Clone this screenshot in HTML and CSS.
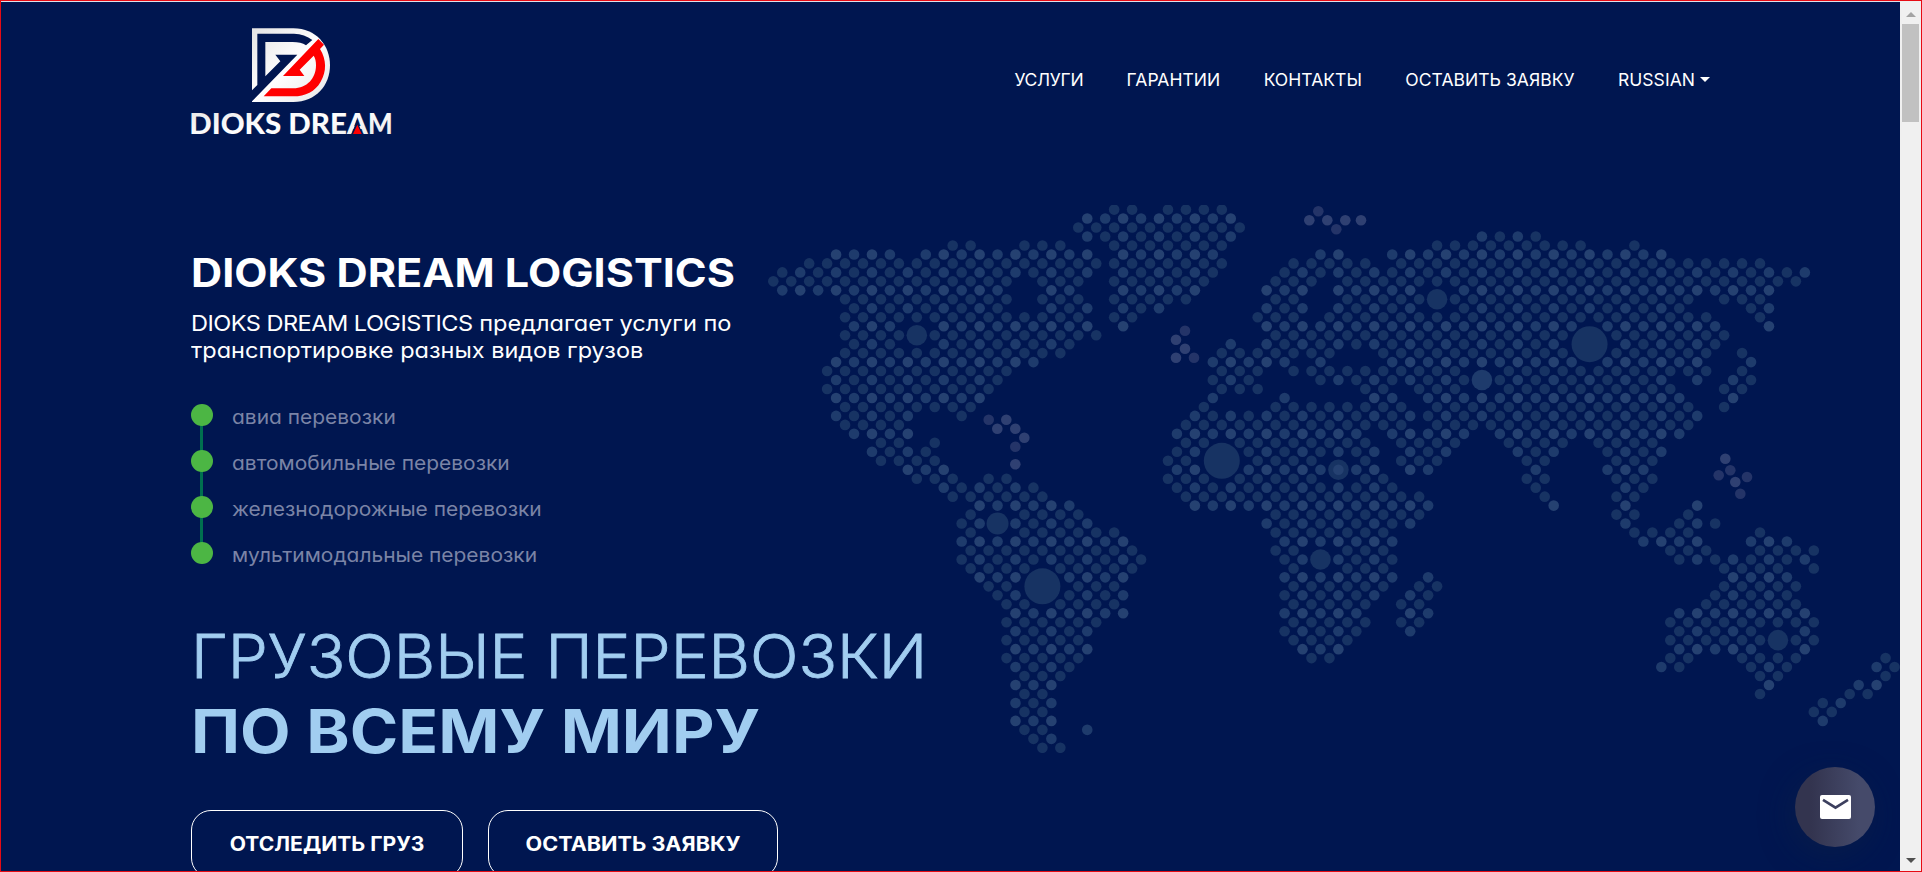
FILE: index.html
```html
<!DOCTYPE html>
<html lang="ru">
<head>
<meta charset="utf-8">
<title>DIOKS DREAM LOGISTICS</title>
<link rel="stylesheet" href="styles.css">
</head>
<body>
<div class="frame">
  <main class="page">
    <svg class="map" id="map" viewBox="768 205 1132 548" aria-hidden="true"></svg>
    <header class="header">
      <a class="logo" href="#" aria-label="DIOKS DREAM">
        <svg viewBox="60 50 624 360" width="208" height="120">
          <defs>
            <linearGradient id="silver" x1="0" y1="0" x2="1" y2="1">
              <stop offset="0" stop-color="#e4e4e4"/><stop offset=".5" stop-color="#fff"/><stop offset="1" stop-color="#e6e6e6"/>
            </linearGradient>
          </defs>
          <path fill="url(#silver)" d="M246 54H370C438 54 480 105 480 165S438 275 370 275H246Z"/>
          <path fill="#001650" d="M262 70H372Q404 71 427 89L408 105Q393 95 368 95H286V198L331 153L316 133H382L243 276V243L262 224Z"/>
          <path fill="url(#silver)" d="M246 275L439 84L452 96L290 262H262Z"/>
          <path fill="#f00" d="M445 86L462 103L450 116C470 148 470 184 452 214C436 243 406 258 370 258H281L304 234H370C411 234 438 204 438 165C438 152 436 144 431 136L389 178L403 197H339Z"/>
          <text class="logo-text" y="371"><tspan x="58" textLength="276" lengthAdjust="spacingAndGlyphs">DIOKS</tspan> <tspan x="355" textLength="238" lengthAdjust="spacingAndGlyphs">DREA</tspan><tspan x="594" textLength="74" lengthAdjust="spacingAndGlyphs">M</tspan></text>
          <path fill="#001650" d="M561 328L578 373H544Z"/>
          <path fill="#f00" d="M562 343L575 371H549Z"/>
        </svg>
      </a>
      <nav class="nav">
        <a class="tight" href="#">УСЛУГИ</a>
        <a href="#">ГАРАНТИИ</a>
        <a href="#">КОНТАКТЫ</a>
        <a href="#">ОСТАВИТЬ ЗАЯВКУ</a>
        <a href="#">RUSSIAN<i class="caret"></i></a>
      </nav>
    </header>
    <section class="hero">
      <h1 class="title"><span>DIOKS DREAM LOGISTICS</span></h1>
      <p class="lead"><span class="lead-a"><span class="latin">DIOKS DREAM LOGISTICS</span> предлагает услуги по</span><br><span class="lead-b">транспортировке разных видов грузов</span></p>
      <ul class="services">
        <li><span>авиа перевозки</span></li>
        <li><span>автомобильные перевозки</span></li>
        <li><span>железнодорожные перевозки</span></li>
        <li><span>мультимодальные перевозки</span></li>
      </ul>
      <h2 class="slogan"><span class="thin">ГРУЗОВЫЕ ПЕРЕВОЗКИ</span><span class="bold">ПО ВСЕМУ МИРУ</span></h2>
      <div class="actions">
        <a class="btn b1" href="#"><span>ОТСЛЕДИТЬ ГРУЗ</span></a>
        <a class="btn b2" href="#"><span>ОСТАВИТЬ ЗАЯВКУ</span></a>
      </div>
    </section>
    <a class="mail" href="#" aria-label="Почта">
      <svg viewBox="0 0 31 24" width="31" height="24"><rect width="31" height="24" rx="2" fill="#fff"/><path d="M3 4.8L15.500 12.700L28 4.800" fill="none" stroke="#3c3f5e" stroke-width="2.600"/></svg>
    </a>
  </main>
  <aside class="scrollbar"><i class="up"></i><i class="thumb"></i><i class="down"></i></aside>
</div>
<script src="map.js"></script>
</body>
</html>
```
FILE: styles.css
```css
* { box-sizing: border-box; }
body { margin: 0; background: #001650; font-family: Inter, "Open Sans", sans-serif; font-feature-settings: "cv11"; overflow: hidden; }
a { color: inherit; text-decoration: none; }
.frame { width: 1922px; height: 872px; border: 1px solid #e60b14; display: flex; overflow: hidden; }
.page { position: relative; flex: 1; background: #001650; overflow: hidden; color: #fff; border-top: 1px solid #dfe1ea; }
.map { position: absolute; left: 767px; top: 203px; width: 1132px; height: 548px; }
.header { position: relative; display: flex; justify-content: space-between; align-items: flex-start; height: 200px; padding: 24.700px 190px 0 189px; }
.logo svg { display: block; }
.logo-text { font: 900 86px Lato, sans-serif; fill: url(#silver); }
.nav { display: flex; gap: 43.300px; padding-top: 42px; font-size: 17.500px; line-height: 22px; font-weight: 400; white-space: nowrap; }
.nav a { display: flex; align-items: center; letter-spacing: .05px; }
.nav .tight { letter-spacing: -.3px; }
.caret { margin-left: 5px; border: 5px solid transparent; border-top: 5px solid #fff; border-bottom: 0; }
.hero { position: relative; padding: 45px 0 0 190px; white-space: nowrap; }
.title { margin: 0; font-size: 39px; line-height: 52px; font-weight: 700; }
.title > span, .lead > span, .services span { display: inline-block; transform-origin: 0 50%; }
.title span { transform: scaleX(1.106); }
.lead { margin: 10.500px 0 0; font-size: 22px; line-height: 27px; }
.lead .latin { letter-spacing: -.5px; }
.lead .lead-a { transform: scaleX(1.071); }
.lead .lead-b { transform: scaleX(1.068); }
.services { list-style: none; margin: 28px 0 0; padding: 0; color: #7b84a6; font-size: 20px; }
.services span { transform: scaleX(1.047); }
.services li { position: relative; height: 46.100px; line-height: 46px; padding: 2.500px 0 0 41px; }
.services li::before { content: ""; position: absolute; left: 0; top: 12px; width: 22px; height: 22px; border-radius: 50%; background: #4cb644; z-index: 1; }
.services li:not(:last-child)::after { content: ""; position: absolute; left: 9px; top: 30px; width: 3px; height: 32px; background: #00704f; }
.slogan { margin: 43.500px 0 0; font-size: 60px; line-height: 75px; color: #a1cdf0; }
.slogan span { display: block; transform-origin: 0 50%; }
.slogan .thin { font-weight: 350; transform: scaleX(1.063); -webkit-text-stroke: .8px #a1cdf0; }
.slogan .bold { font-weight: 700; transform: scaleX(1.095); }
.actions { display: flex; gap: 25px; margin-top: 41px; font-size: 19.500px; font-weight: 700; }
.btn { height: 68px; border: 1px solid #fff; border-radius: 20px; display: flex; align-items: center; justify-content: center; }
.btn span { transform: scaleX(1.080); }
.b1 { width: 272px; }
.b2 { width: 290px; }
.b2 span { transform: scaleX(1.108); }
.mail { position: absolute; left: 1794px; top: 765px; width: 80px; height: 80px; border-radius: 50%; background: linear-gradient(90deg, #33344f 20%, #454a6a 80%); box-shadow: -4px 8px 30px rgba(12, 32, 70, .55); display: flex; align-items: center; justify-content: center; }
.scrollbar { width: 21px; background: #f0f0f0; display: flex; flex-direction: column; align-items: center; padding: 11px 0 8px; }
.up { border: 5px solid transparent; border-bottom: 5px solid #a3a3a3; border-top: 0; }
.thumb { width: 17px; height: 98px; margin-top: 7px; background: #c1c1c1; }
.down { margin-top: auto; border: 5px solid transparent; border-top: 5px solid #505050; border-bottom: 0; }
```
FILE: map.js
```javascript
// Each row lists runs of occupied lattice columns; columns advance by two.
const rows = [
  "38-40,44-50", "35-51", "34-52", "35-51,79-85", "20-22,28-32,38-50,74-90,96",
  "7-13,17-35,39-49,61-63,69-99", "4-50,58-66,70-110", "1-35,39-49,57-115",
  "0-26,30-34,38-48,56-60,64-114", "1-25,31-33,39-47,55-59,63-71,77-111",
  "8-26,30-34,38-46,56-58,64-72,76-102,106-110", "9-25,31-35,39-43,55-59,63-71,77-101,109-111",
  "8-34,38-40,54-58,62-104,110", "9-13,19-35,39,55-89,93-105,111", "8-14,18-36,56-88,94-106",
  "9-13,19-33,51,55-87,95-105", "8-32,50-62,68-88,94-104,108", "7-29,49-57,61,69-89,93-103,109",
  "6-26,50-54,58-76,82-104,108", "7-25,49-53,61-77,81-99,103,107-109",
  "6-24,50-54,66-68,72-76,82-100,106-108", "7-23,49,57,67-69,73-101,107", "8-22,48,56-70,74-102,106",
  "7-15,21,47-103", "8-14,46-70,74-102", "9-15,45-65,69-77,81-101",
  "12-14,18,46-48,52-66,70-76,82-88,92-98", "11-17,45-47,53-67,71-75,83-87,93-99",
  "12-18,44-46,54-60,66,70-74,84-86,94-98", "15-19,45-47,53-67,71-73,85,93-97",
  "16-20,24-26,44-48,52-60,66-68,84-86,94-98", "19-29,45-69,85,95-97", "20-30,46-72,86,94-96",
  "23-33,47-73,87,95,103", "22,28-34,56-72,94-96,102", "21-23,27-35,55-71,95,101-105",
  "22,28-38,56-68,96-102,110", "21-39,57-69,97-103,109-113", "22-40,56-58,64-68,100-104,110-116",
  "21-41,57-59,63-69,101-115", "22-28,32-40,58,64-68,106-112,116", "23-27,33-39,57-69,73,107-113",
  "24-26,34-38,58-68,72-74,106-114", "25-27,33-39,57-67,71-73,105-113", "26-28,32-38,58-66,70-72,104-114",
  "27-39,57-65,71-73,101-115", "26-36,58-66,70-72,100-116", "27-35,57-65,71,101-109,115",
  "26-34,58-64,100-110,114-116", "27-35,59-63,101-109,115", "26-34,60-62,100-102,108-114,124",
  "27-33,99-101,109-113,123-125", "28-32,110-112,124", "27-31,111,121-123", "28-30,110,120-122",
  "27-31,117-119", "28-30,116-118", "27-31,117", "28-30", "29-31", "30-32"
];
const STEP = 8.97, X0 = 773.3, Y0 = 209.6;
const shades = ["#173363", "#1e3b6c", "#254171"];
const out = [];
const dot = (x, y, r, fill) =>
  out.push(`<circle cx="${x.toFixed(2)}" cy="${y.toFixed(2)}" r="${r}" fill="${fill}"/>`);
const at = (i, j, r, fill) => dot(X0 + i * STEP, Y0 + j * STEP, r, fill);

// City markers: column, row, radius, shade.
[[16, 14, 10.3, 0], [74, 10, 10.3, 0], [79, 19, 10.3, 1], [91, 15, 18, 0], [63, 29, 10.3, 0],
 [50, 28, 18, 0], [25, 35, 11, 0], [30, 42, 18, 0], [61, 39, 10.3, 0], [112, 48, 10.3, 0]]
  .forEach(([i, j, r, s]) => at(i, j, r, shades[s]));

rows.forEach((row, j) => row.split(",").forEach(run => {
  const [a, b = a] = run.split("-").map(Number);
  for (let i = a; i <= b; i += 2) at(i, j, 5.3, shades[(i % 4 === 3) + (j % 4 === 1)]);
}));
at(35, 58, 5.3, shades[1]);

// Island groups.
[[988.7, 419.7, 0], [1006.3, 419.7, 1], [997.3, 428.7, 1], [1015.3, 428.7, 1], [1024.3, 437.7, 1],
 [1015.3, 446.7, 0], [1015.3, 464.3, 1], [1185, 330.7, 0], [1176, 339.7, 1], [1185, 348.7, 1],
 [1176, 357.7, 1], [1194, 357.7, 0], [1318.3, 211.3, 0], [1309.3, 220.3, 1], [1327.3, 220.3, 1],
 [1336.3, 229.3, 0], [1345.3, 220.3, 1], [1361, 220.3, 1], [1725.3, 458.7, 1], [1730.3, 470.3, 0],
 [1718.7, 475.3, 0], [1747, 477, 0], [1735.3, 482, 1], [1740.3, 493.7, 0]]
  .forEach(([x, y, s]) => dot(x, y, 5.3, s ? "#2f4072" : "#243468"));

document.getElementById("map").innerHTML = out.join("");
```
